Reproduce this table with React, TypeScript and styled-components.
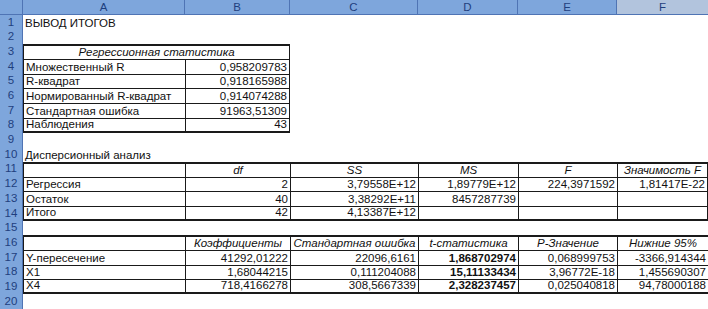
import React from "react";
import styled, { createGlobalStyle } from "styled-components";

const GlobalStyle = createGlobalStyle`
  html, body {
    margin: 0;
    padding: 0;
    background: #ffffff;
    overflow: hidden;
  }
  body {
    font-family: "Liberation Sans", Arial, sans-serif;
  }
`;

/* ===== DATA ===== */
const COLUMNS = ["A", "B", "C", "D", "E", "F"];
const COL_WIDTHS = "23px 162px 105px 128px 100px 99px 1fr";
const ROW_COUNT = 20;

type Align = "left" | "right" | "center";
type CellDef = { text?: string; align?: Align; italic?: boolean; bold?: boolean; span?: number };

// open = таблица продолжается правее видимой области
type TableDef = { r0: number; r1: number; c0: number; c1: number; open?: boolean };

const TABLES: TableDef[] = [
  { r0: 3, r1: 8, c0: 0, c1: 1 },
  { r0: 11, r1: 14, c0: 0, c1: 5 },
  { r0: 16, r1: 19, c0: 0, c1: 5, open: true },
];

const h = (text: string): CellDef => ({ text, align: "center", italic: true });
const n = (text: string, bold = false): CellDef => ({ text, align: "right", bold });
const l = (text: string): CellDef => ({ text, align: "left" });

const SHEET: Record<number, CellDef[]> = {
  1: [l("ВЫВОД ИТОГОВ")],
  3: [{ text: "Регрессионная статистика", align: "center", italic: true, span: 2 }],
  4: [l("Множественный R"), n("0,958209783")],
  5: [l("R-квадрат"), n("0,918165988")],
  6: [l("Нормированный R-квадрат"), n("0,914074288")],
  7: [l("Стандартная ошибка"), n("91963,51309")],
  8: [l("Наблюдения"), n("43")],
  10: [l("Дисперсионный анализ")],
  11: [{}, h("df"), h("SS"), h("MS"), h("F"), h("Значимость F")],
  12: [l("Регрессия"), n("2"), n("3,79558E+12"), n("1,89779E+12"), n("224,3971592"), n("1,81417E-22")],
  13: [l("Остаток"), n("40"), n("3,38292E+11"), n("8457287739"), {}, {}],
  14: [l("Итого"), n("42"), n("4,13387E+12"), {}, {}, {}],
  16: [{}, h("Коэффициенты"), h("Стандартная ошибка"), h("t-статистика"), h("P-Значение"), h("Нижние 95%")],
  17: [l("Y-пересечение"), n("41292,01222"), n("22096,6161"), n("1,868702974", true), n("0,068999753"), n("-3366,914344")],
  18: [l("X1"), n("1,68044215"), n("0,111204088"), n("15,11133434", true), n("3,96772E-18"), n("1,455690307")],
  19: [l("X4"), n("718,4166278"), n("308,5667339"), n("2,328237457", true), n("0,025040818"), n("94,78000188")],
};

/* ===== STYLED COMPONENTS ===== */
const Sheet = styled.div`
  display: grid;
  grid-template-columns: ${COL_WIDTHS};
  grid-template-rows: 15px;
  grid-auto-rows: 14.7px;
  width: 708px;
  height: 309px;
  overflow: hidden;
  font-size: 11.5px;
  color: #111111;
`;

const Corner = styled.div`
  background: #7ea6dc;
  border-right: 1px solid #4f74b4;
  border-bottom: 1px solid #4f74b4;
  box-sizing: border-box;
`;

const ColHeader = styled.div<{ $selected?: boolean }>`
  display: flex;
  align-items: center;
  justify-content: center;
  box-sizing: border-box;
  background: ${(p) => (p.$selected ? "#b2c4dd" : "#7ea6dc")};
  border-right: ${(p) => (p.$selected ? "none" : "1px solid #4f74b4")};
  border-bottom: 1px solid #4f74b4;
  color: #1f3f7e;
  font-size: 11.5px;
  line-height: 1;
  padding-top: 1px;
`;

const RowHeader = styled.div`
  display: flex;
  align-items: center;
  justify-content: center;
  box-sizing: border-box;
  background: #7ea6dc;
  border-right: 1px solid #4f74b4;
  color: #1f3f7e;
  font-size: 11.5px;
  line-height: 1;
`;

const Cell = styled.div<{
  $align: Align;
  $italic?: boolean;
  $bold?: boolean;
  $span: number;
  $bt: number;
  $bb: number;
  $bl: number;
  $br: number;
}>`
  grid-column: span ${(p) => p.$span};
  display: flex;
  align-items: flex-end;
  justify-content: ${(p) =>
    p.$align === "right" ? "flex-end" : p.$align === "center" ? "center" : "flex-start"};
  box-sizing: border-box;
  padding: 0 2px 0 2px;
  white-space: nowrap;
  line-height: 13px;
  font-style: ${(p) => (p.$italic ? "italic" : "normal")};
  font-weight: ${(p) => (p.$bold ? 700 : 400)};
  border-style: solid;
  border-color: #1a1a1a;
  border-width: ${(p) => `${p.$bt}px ${p.$br}px ${p.$bb}px ${p.$bl}px`};
  position: relative;
  z-index: ${(p) => (p.$align === "left" ? 1 : 0)};
`;

/* ===== HELPERS ===== */
const bordersFor = (row: number, col: number, span: number) => {
  const t = TABLES.find((t) => row >= t.r0 && row <= t.r1 && col >= t.c0 && col <= t.c1);
  if (!t) return { bt: 0, bb: 0, bl: 0, br: 0 };
  const last = col + span - 1;
  return {
    bt: row === t.r0 ? 2 : 1,
    bb: row === t.r1 ? 2 : 0,
    bl: 1,
    br: last === t.c1 && !t.open ? 1 : 0,
  };
};

const SheetRow: React.FC<{ row: number }> = ({ row }) => {
  const defs = SHEET[row] ?? [];
  const cells: React.ReactNode[] = [];
  let col = 0;
  let i = 0;
  while (col < COLUMNS.length) {
    const def = defs[i] ?? {};
    const span = def.span ?? 1;
    const b = bordersFor(row, col, span);
    cells.push(
      <Cell
        key={col}
        $align={def.align ?? "left"}
        $italic={def.italic}
        $bold={def.bold}
        $span={span}
        $bt={b.bt}
        $bb={b.bb}
        $bl={b.bl}
        $br={b.br}
      >
        {def.text}
      </Cell>
    );
    col += span;
    i += 1;
  }
  return (
    <>
      <RowHeader>{row}</RowHeader>
      {cells}
    </>
  );
};

/* ===== APP ===== */
const App: React.FC = () => {
  return (
    <>
      <GlobalStyle />
      <Sheet>
        <Corner />
        {COLUMNS.map((c) => (
          <ColHeader key={c} $selected={c === "F"}>
            {c}
          </ColHeader>
        ))}
        {Array.from({ length: ROW_COUNT }, (_, idx) => (
          <SheetRow key={idx + 1} row={idx + 1} />
        ))}
      </Sheet>
    </>
  );
};

export default App;
